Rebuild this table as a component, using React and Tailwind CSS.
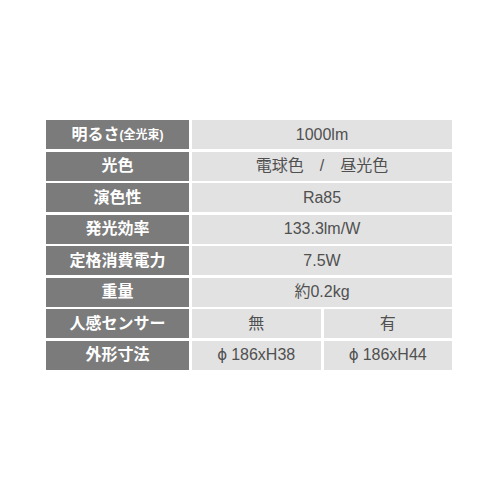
import React from "react";

const Phi = () => (
  <span className="mr-[4px] text-[15px]" style={{ fontFamily: '"DejaVu Sans", sans-serif' }}>
    ϕ
  </span>
);

const rows = [
  { label: "明るさ", sub: "(全光束)", value: "1000lm" },
  { label: "光色", value: "電球色　/　昼光色" },
  { label: "演色性", value: "Ra85" },
  { label: "発光効率", value: "133.3lm/W" },
  { label: "定格消費電力", value: "7.5W" },
  { label: "重量", value: "約0.2kg" },
  { label: "人感センサー", values: ["無", "有"] },
  {
    label: "外形寸法",
    values: [
      <><Phi />186xH38</>,
      <><Phi />186xH44</>,
    ],
  },
];

const App = () => {
  return (
    <div
      className="w-[500px] h-[500px] bg-white pt-[120px] pl-[46px]"
      style={{ fontFamily: '"Liberation Sans", "Noto Sans CJK JP", sans-serif' }}
    >
      <div className="w-[406px] flex flex-col gap-[2.5px]">
        {rows.map((r, i) => (
          <div key={i} className="flex h-[29px] gap-[3px]">
            {/* label */}
            <div className="w-[143px] bg-[#7b7b7b] text-white font-bold text-[16px] flex items-center justify-center">
              {r.label}
              {r.sub && <span className="text-[12px]">{r.sub}</span>}
            </div>
            {/* value */}
            {r.values ? (
              <div className="flex-1 flex gap-[3px]">
                {r.values.map((v, j) => (
                  <div
                    key={j}
                    className="flex-1 bg-[#e2e2e2] text-[#505050] text-[16px] flex items-center justify-center"
                  >
                    {v}
                  </div>
                ))}
              </div>
            ) : (
              <div className="flex-1 bg-[#e2e2e2] text-[#505050] text-[16px] flex items-center justify-center whitespace-pre">
                {r.value}
              </div>
            )}
          </div>
        ))}
      </div>
    </div>
  );
};

export default App;
